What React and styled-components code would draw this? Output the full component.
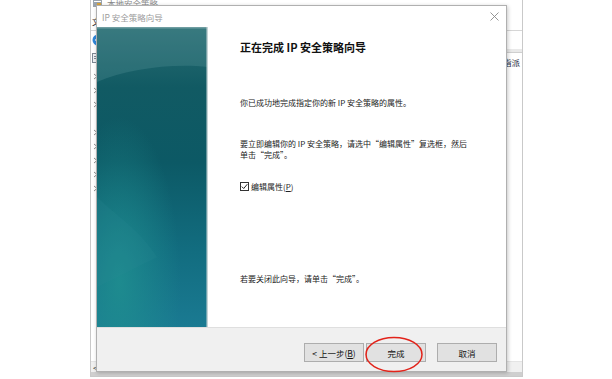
import styled, { createGlobalStyle } from "styled-components";

const GlobalStyle = createGlobalStyle`
  html, body {
    margin: 0;
    padding: 0;
    background: #fff;
  }
  body {
    font-family: "Noto Sans CJK SC", "Noto Sans", sans-serif;
    color: #1e1e1e;
  }
`;

const Desktop = styled.div`
  position: relative;
  width: 612px;
  height: 379px;
  overflow: hidden;
  background: #fff;
`;

/* background console window, mostly hidden behind the wizard */
const MainWindow = styled.div`
  position: absolute;
  left: 90px;
  top: -8px;
  width: 433px;
  height: 385px;
  box-sizing: border-box;
  border: 1px solid #c9c9c9;
  background: #fff;
  display: flex;
  flex-direction: column;
`;

const MainTitle = styled.div`
  height: 19px;
  display: flex;
  align-items: center;
  gap: 4px;
  padding-left: 1px;
  font-size: 8.5px;
  color: #8a8a8a;
`;

const MenuBar = styled.div`
  height: 18px;
  display: flex;
  align-items: center;
  padding-left: 1px;
  font-size: 8.5px;
  border-bottom: 1px solid #d6d6d6;
`;

const Toolbar = styled.div`
  height: 18px;
  display: flex;
  align-items: center;
  padding-left: 1px;
`;

const ConsoleBody = styled.div`
  flex: 1;
  display: flex;
  min-height: 0;
`;

const TreePane = styled.div`
  width: 230px;
  border-right: 1px solid #e2e2e2;
  display: flex;
  flex-direction: column;
`;

const TreeRow = styled.div`
  height: ${({ $root }) => ($root ? "18px" : "14px")};
  margin-bottom: ${({ $root }) => ($root ? "2px" : "0")};
  display: flex;
  align-items: center;
  gap: 4px;
  padding-left: ${({ $root }) => ($root ? "1px" : "2px")};
  font-size: 8.5px;
  white-space: nowrap;
`;

const ListPane = styled.div`
  flex: 1;
  display: flex;
  flex-direction: column;
`;

const ListHeaderBar = styled.div`
  height: 3px;
  background: #e9e9e9;
  border-bottom: 1px solid #cfcfcf;
`;

const ListHeaderText = styled.div`
  height: 17px;
  display: flex;
  align-items: center;
  justify-content: flex-end;
  padding-right: 2px;
  font-size: 8.5px;
  color: #2b2f45;
`;

const HScroll = styled.div`
  height: 10px;
  display: flex;
  align-items: center;
  padding-left: 2px;
  background: #f0f0f0;
  font-size: 8px;
  color: #333;
  border-top: 1px solid #e4e4e4;
`;

const StatusBar = styled.div`
  height: 4px;
  background: #cfcfcf;
`;

/* wizard dialog */
const Dialog = styled.div`
  position: absolute;
  left: 96px;
  top: 5px;
  width: 411px;
  height: 367px;
  box-sizing: border-box;
  border: 1px solid #b0b0b0;
  background: #fff;
  box-shadow: 1px 1px 4px rgba(0, 0, 0, 0.22);
  display: flex;
  flex-direction: column;
`;

const DialogTitle = styled.div`
  height: 21px;
  display: flex;
  align-items: center;
  justify-content: space-between;
  padding: 0 7px 0 5px;
  font-size: 8.5px;
  color: #9b9b9b;
`;

const DialogBody = styled.div`
  flex: 1;
  display: flex;
  min-height: 0;
`;

const SidePanel = styled.div`
  width: 111px;
  flex-shrink: 0;
  display: flex;

  svg {
    display: block;
  }
`;

const Content = styled.div`
  flex: 1;
  display: flex;
  flex-direction: column;
  padding: 13px 0 0 32px;
`;

const Heading = styled.h1`
  margin: 0;
  font-size: 11px;
  line-height: 14px;
  font-weight: 700;
  color: #111;
`;

const Paragraph = styled.p`
  margin: ${({ $gap }) => $gap}px 0 0;
  font-size: 8px;
  line-height: 11px;
  color: #222;
  white-space: nowrap;
`;

const CheckRow = styled.label`
  margin-top: 21px;
  height: 11px;
  display: flex;
  align-items: center;
  gap: 2px;
  font-size: 8px;
  color: #222;
`;

const CheckBox = styled.span`
  width: 9px;
  height: 9px;
  box-sizing: border-box;
  border: 1px solid #333;
  background: #fff;
  display: flex;
  align-items: center;
  justify-content: center;
`;

const Key = styled.span`
  text-decoration: underline;
`;

const Footer = styled.div`
  height: 44px;
  box-sizing: border-box;
  border-top: 1px solid #dfdfdf;
  background: #f0f0f0;
  display: flex;
  justify-content: flex-end;
  align-items: flex-start;
  padding: 15px 9px 0 0;
`;

const Button = styled.button`
  width: 60px;
  height: 19px;
  box-sizing: border-box;
  margin: 0 ${({ $after }) => $after || 0}px 0 0;
  padding: 0;
  border: 1px solid #adadad;
  background: #e1e1e1;
  font-family: inherit;
  font-size: 8.5px;
  color: #111;
`;

const Mark = styled.svg`
  position: absolute;
  left: 364px;
  top: 335px;
`;

const Chevron = () => (
  <svg width="5" height="7" viewBox="0 0 5 7">
    <path d="M1 1 L4 3.5 L1 6" fill="none" stroke="#8c8c8c" strokeWidth="1" />
  </svg>
);

const treeItems = [
  "帐户策略",
  "本地策略",
  "高级审核策略配置",
  "",
  "Windows Defender 防火墙",
  "网络列表管理器策略",
  "公钥策略",
  "软件限制策略",
  "应用程序控制策略",
];

const TealArt = () => (
  <svg width="111" height="300" viewBox="0 0 111 300" preserveAspectRatio="none">
    <defs>
      <linearGradient id="tealBase" x1="0" y1="0" x2="0" y2="1">
        <stop offset="0" stopColor="#2a6d73" />
        <stop offset="0.2" stopColor="#115a63" />
        <stop offset="0.45" stopColor="#0c5965" />
        <stop offset="0.75" stopColor="#126d80" />
        <stop offset="1" stopColor="#1a7a92" />
      </linearGradient>
      <radialGradient id="tealGlow" cx="0.2" cy="0.85" r="0.55">
        <stop offset="0" stopColor="#1f8f90" stopOpacity="0.85" />
        <stop offset="1" stopColor="#1f8f90" stopOpacity="0" />
      </radialGradient>
    </defs>
    <rect width="111" height="300" fill="url(#tealBase)" />
    <rect width="111" height="300" fill="url(#tealGlow)" />
    <path d="M0 0 H111 V40 C75 36 30 42 0 55 Z" fill="#6aa3a6" opacity="0.24" />
    <path d="M0 170 C20 190 40 200 60 230 L0 260 Z" fill="#2a8c94" opacity="0.18" />
    <rect width="111" height="1.5" fill="#6f9da1" />
    <rect x="109.5" width="1.5" height="300" fill="#c5d3d5" />
  </svg>
);

export default function App() {
  return (
    <Desktop>
      <GlobalStyle />
      <MainWindow>
        <MainTitle>
          <svg width="11" height="11" viewBox="0 0 11 11">
            <rect x="1" y="1" width="9" height="9" fill="#9aa4ae" />
            <rect x="2" y="4" width="7" height="1" fill="#fff" />
            <rect x="5" y="6" width="4" height="4" fill="#d7a23b" />
          </svg>
          本地安全策略
        </MainTitle>
        <MenuBar>文件(F)&nbsp;&nbsp;操作(A)&nbsp;&nbsp;查看(V)&nbsp;&nbsp;帮助(H)</MenuBar>
        <Toolbar>
          <svg width="12" height="12" viewBox="0 0 12 12">
            <circle cx="6" cy="6" r="5.5" fill="#2f86d8" />
            <path d="M7.5 3 L4 6 L7.5 9" fill="none" stroke="#fff" strokeWidth="1.6" />
          </svg>
        </Toolbar>
        <ConsoleBody>
          <TreePane>
            <TreeRow $root>
              <svg width="9" height="11" viewBox="0 0 9 11">
                <rect x="0.5" y="0.5" width="7" height="9" fill="#eef0f3" stroke="#7d8793" />
                <rect x="2" y="3" width="4" height="1" fill="#7d8793" />
                <rect x="2" y="5" width="4" height="1" fill="#7d8793" />
                <rect x="5" y="7" width="4" height="4" fill="#e0a030" />
              </svg>
              安全设置
            </TreeRow>
            {treeItems.map((item, index) => (
              <TreeRow key={index}>
                {item && <Chevron />}
                {item}
              </TreeRow>
            ))}
          </TreePane>
          <ListPane>
            <ListHeaderBar />
            <ListHeaderText>策略已指派</ListHeaderText>
          </ListPane>
        </ConsoleBody>
        <HScroll>&lt;</HScroll>
        <StatusBar />
      </MainWindow>

      <Dialog>
        <DialogTitle>
          IP 安全策略向导
          <svg width="9" height="9" viewBox="0 0 9 9">
            <path d="M0.5 0.5 L8.5 8.5 M8.5 0.5 L0.5 8.5" stroke="#8a8a8a" strokeWidth="0.9" />
          </svg>
        </DialogTitle>
        <DialogBody>
          <SidePanel>
            <TealArt />
          </SidePanel>
          <Content>
            <Heading>正在完成 IP 安全策略向导</Heading>
            <Paragraph $gap={43}>你已成功地完成指定你的新 IP 安全策略的属性。</Paragraph>
            <Paragraph $gap={30}>
              要立即编辑你的 IP 安全策略，请选中“编辑属性”复选框，然后
              <br />
              单击“完成”。
            </Paragraph>
            <CheckRow>
              <CheckBox>
                <svg width="7" height="7" viewBox="0 0 7 7">
                  <path d="M0.8 3.6 L2.7 5.5 L6.3 1.2" fill="none" stroke="#222" strokeWidth="1" />
                </svg>
              </CheckBox>
              <span>
                编辑属性(<Key>P</Key>)
              </span>
            </CheckRow>
            <Paragraph $gap={81}>若要关闭此向导，请单击“完成”。</Paragraph>
          </Content>
        </DialogBody>
        <Footer>
          <Button $after={2}>
            &lt; 上一步(<Key>B</Key>)
          </Button>
          <Button $after={11}>完成</Button>
          <Button>取消</Button>
        </Footer>
      </Dialog>

      <Mark width="60" height="40" viewBox="0 0 60 40">
        <ellipse cx="30" cy="19.5" rx="28" ry="17" fill="none" stroke="#e2231a" strokeWidth="1.5" />
      </Mark>
    </Desktop>
  );
}
